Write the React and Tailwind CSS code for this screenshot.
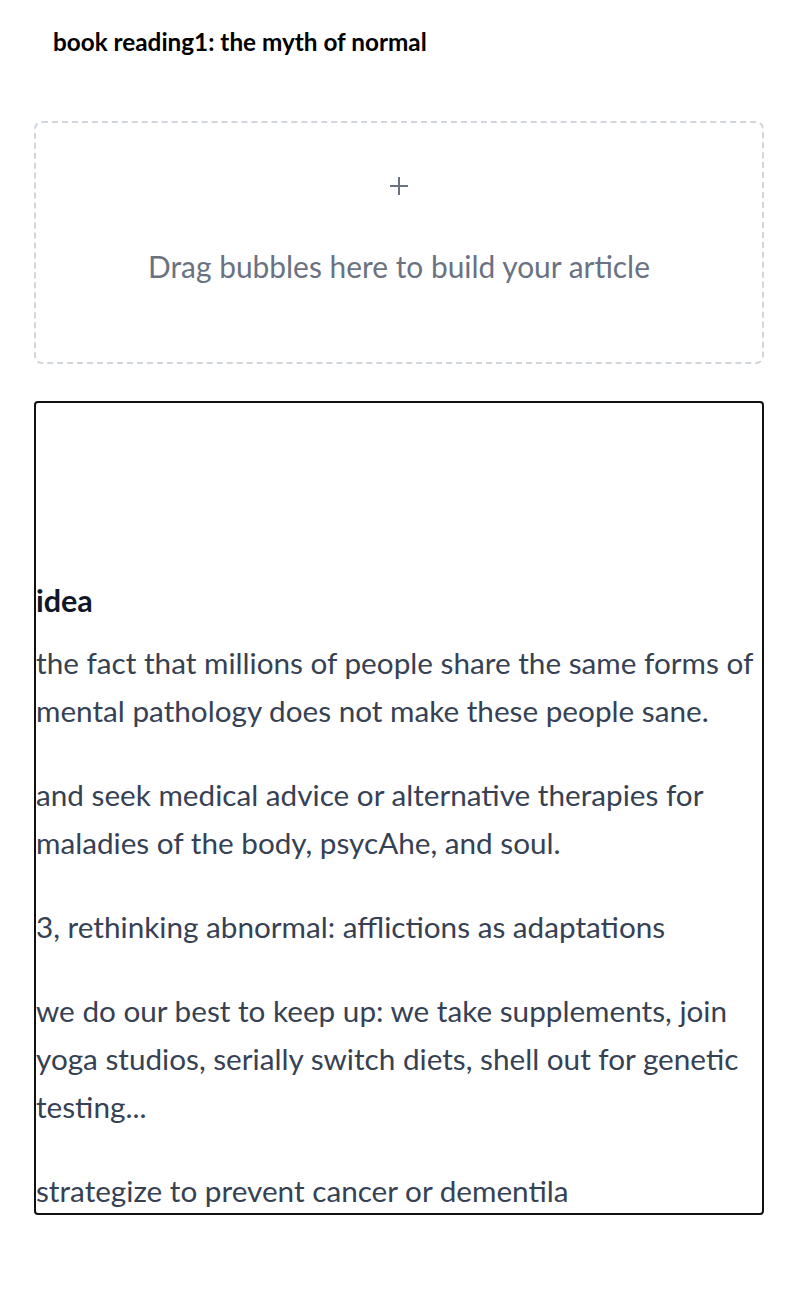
import React from "react";

const paras = [
  "the fact that millions of people share the same forms of mental pathology does not make these people sane.",
  "and seek medical advice or alternative therapies for maladies of the body, psycAhe, and soul.",
  "3, rethinking abnormal: afflictions as adaptations",
  "we do our best to keep up: we take supplements, join yoga studios, serially switch diets, shell out for genetic testing...",
  "strategize to prevent cancer or dementila",
];

export default function App() {
  return (
    <div className="min-h-screen bg-white font-['Lato',sans-serif]">
      <div className="ml-[34px] w-[730px]">
        {/* title */}
        <h1 className="pl-[19px] pt-[28px] text-[24.3px] leading-[28px] font-bold text-black">
          book reading1: the myth of normal
        </h1>

        {/* drop zone */}
        <div className="mt-[65px] h-[243px] rounded-lg border-2 border-dashed border-gray-300 flex flex-col items-center pt-[54px]">
          <svg width="18" height="18" viewBox="0 0 18 18" className="text-gray-500">
            <rect x="8" y="0" width="2" height="18" fill="currentColor" />
            <rect x="0" y="8" width="18" height="2" fill="currentColor" />
          </svg>
          <p className="mt-[51px] text-[29.9px] leading-[40px] text-gray-500">
            Drag bubbles here to build your article
          </p>
        </div>

        {/* article card */}
        <div className="mt-[37px] h-[814px] rounded-[4px] border-2 border-[#111] overflow-hidden pt-[177px]">
          <h3 className="text-[30.5px] leading-[40px] font-bold text-gray-900 mb-[19px]">idea</h3>
          <div className="flex flex-col gap-[36px]">
            {paras.map((p, i) => (
              <p key={i} className="text-[29.7px] leading-[48px] text-gray-700">
                {p}
              </p>
            ))}
          </div>
        </div>
      </div>
    </div>
  );
}
